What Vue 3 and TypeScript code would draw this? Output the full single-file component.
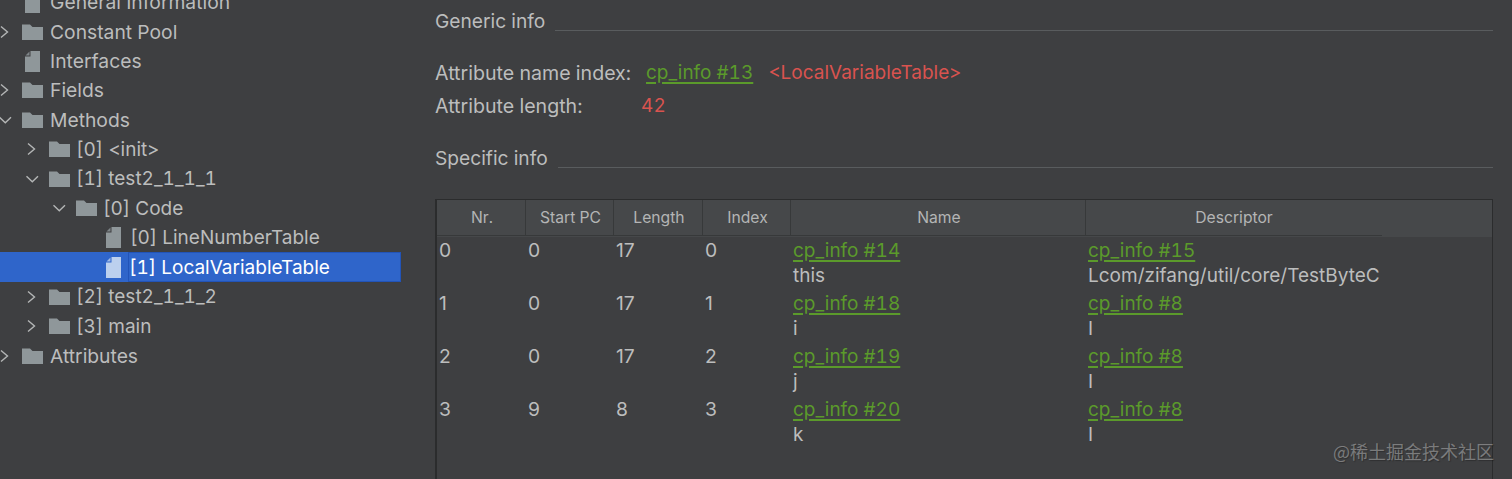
<script setup lang="ts">
interface Node { label: string; level: number; kind: 'folder' | 'file'; arrow?: 'right' | 'down'; selected?: boolean }
const tree: Node[] = [
  { label: 'General Information', level: 0, kind: 'file' },
  { label: 'Constant Pool', level: 0, kind: 'folder', arrow: 'right' },
  { label: 'Interfaces', level: 0, kind: 'file' },
  { label: 'Fields', level: 0, kind: 'folder', arrow: 'right' },
  { label: 'Methods', level: 0, kind: 'folder', arrow: 'down' },
  { label: '[0] <init>', level: 1, kind: 'folder', arrow: 'right' },
  { label: '[1] test2_1_1_1', level: 1, kind: 'folder', arrow: 'down' },
  { label: '[0] Code', level: 2, kind: 'folder', arrow: 'down' },
  { label: '[0] LineNumberTable', level: 3, kind: 'file' },
  { label: '[1] LocalVariableTable', level: 3, kind: 'file', selected: true },
  { label: '[2] test2_1_1_2', level: 1, kind: 'folder', arrow: 'right' },
  { label: '[3] main', level: 1, kind: 'folder', arrow: 'right' },
  { label: 'Attributes', level: 0, kind: 'folder', arrow: 'right' },
]
const headers = ['Nr.', 'Start PC', 'Length', 'Index', 'Name', 'Descriptor']
const rows = [
  { nr: 0, pc: 0, len: 17, idx: 0, nameRef: 'cp_info #14', name: 'this', descRef: 'cp_info #15', desc: 'Lcom/zifang/util/core/TestByteC' },
  { nr: 1, pc: 0, len: 17, idx: 1, nameRef: 'cp_info #18', name: 'i', descRef: 'cp_info #8', desc: 'I' },
  { nr: 2, pc: 0, len: 17, idx: 2, nameRef: 'cp_info #19', name: 'j', descRef: 'cp_info #8', desc: 'I' },
  { nr: 3, pc: 9, len: 8, idx: 3, nameRef: 'cp_info #20', name: 'k', descRef: 'cp_info #8', desc: 'I' },
]
</script>

<template>
  <div class="page">
    <aside class="sidebar">
      <div
        v-for="n in tree"
        :key="n.label"
        class="node"
        :class="{ selected: n.selected, indented: n.level > 0 }"
        :style="{ paddingLeft: n.level * 27 + 'px' }"
      >
        <span class="arrow">
          <svg v-if="n.arrow === 'right'" width="10" height="14" viewBox="0 0 10 14">
            <path d="M1 1.500l6.500 5.500L1 12.500" fill="none" stroke="currentColor" stroke-width="1.400" />
          </svg>
          <svg v-else-if="n.arrow === 'down'" class="down" width="13" height="10" viewBox="0 0 13 10">
            <path d="M0.500 2.300l5.800 5.500L12 2.300" fill="none" stroke="currentColor" stroke-width="1.400" />
          </svg>
        </span>
        <span class="icon">
          <svg v-if="n.kind === 'folder'" width="21" height="16" viewBox="0 0 21 16">
            <path d="M0 0.500h8l2.500 2.500H21v13H0z" fill="currentColor" />
          </svg>
          <svg v-else width="15" height="21" viewBox="0 0 15 21">
            <path d="M5.500 0H15v21H0V5.500H5.500z" fill="currentColor" />
            <path d="M4.500 0.500v4H0.500z" fill="currentColor" opacity="0.8" />
          </svg>
        </span>
        <span class="label">{{ n.label }}</span>
      </div>
    </aside>

    <main class="content">
      <div class="section first">
        <span>Generic info</span>
        <i class="rule"></i>
      </div>
      <div class="attr name-row">
        <span class="attr-label">Attribute name index:</span>
        <a class="link attr-link">cp_info #13</a>
        <span class="red">&lt;LocalVariableTable&gt;</span>
      </div>
      <div class="attr">
        <span class="attr-label">Attribute length:</span>
        <span class="red num">42</span>
      </div>
      <div class="section second">
        <span>Specific info</span>
        <i class="rule"></i>
      </div>

      <div class="table">
        <div class="thead">
          <div v-for="h in headers" :key="h" class="th">{{ h }}</div>
          <div class="filler"></div>
        </div>
        <div v-for="r in rows" :key="r.nr" class="tr">
          <div class="td">{{ r.nr }}</div>
          <div class="td">{{ r.pc }}</div>
          <div class="td">{{ r.len }}</div>
          <div class="td">{{ r.idx }}</div>
          <div class="td stack"><a class="link">{{ r.nameRef }}</a><span class="plain">{{ r.name }}</span></div>
          <div class="td stack"><a class="link">{{ r.descRef }}</a><span class="plain">{{ r.desc }}</span></div>
        </div>
      </div>
    </main>

    <div class="watermark">@稀土掘金技术社区</div>
  </div>
</template>

<style>
html, body { margin: 0; background: #3e3f41; }
</style>

<style scoped>
.page {
  position: relative;
  display: flex;
  width: 1512px;
  height: 479px;
  overflow: hidden;
  background: #3e3f41;
  color: #bcbdbd;
  font-family: Inter, "Noto Sans", sans-serif;
  font-size: 19.300px;
  font-variant-numeric: tabular-nums;
}
.sidebar {
  flex: 0 0 401px;
  margin-top: -12.600px;
}
.node {
  display: flex;
  align-items: center;
  height: 29.460px;
  box-sizing: border-box;
  white-space: nowrap;
}
.node.indented { font-size: 19px; }
.indented .label { margin-left: -1px; }
.node.selected {
  background: #2f65ca;
  color: #fff;
}
.arrow {
  flex: 0 0 22px;
  display: flex;
  align-items: center;
  justify-content: flex-start;
  color: #b4b6b6;
}
.down { margin-left: -1px; }
.icon {
  flex: 0 0 21px;
  display: flex;
  justify-content: center;
  align-items: center;
  margin-right: 7px;
  color: #8f979a;
}
.selected .icon { color: #bcd0ee; }
.selected .label {
  flex: 1;
  align-self: stretch;
  display: flex;
  align-items: center;
  margin-left: -3px;
  padding-left: 0;
  border: 1px solid #2254b8;
}
.content {
  flex: 1;
  padding: 10px 19px 0 34px;
  min-width: 0;
}
.section {
  display: flex;
  align-items: flex-end;
  gap: 10px;
  height: 24px;
  line-height: 24px;
  font-size: 19.200px;
}
.section span { margin-bottom: 1px; }
.second { margin-top: 25px; }
.rule {
  flex: 1;
  height: 1px;
  margin-bottom: 3px;
  background: #595c5e;
}
.attr {
  display: flex;
  align-items: center;
  height: 33px;
}
.name-row { margin-top: 22px; }
.attr-label { flex: 0 0 207px; font-size: 19.600px; }
.attr-link { margin: 0 15px 0 4px; }
.link {
  color: #5b9a2b;
  font-size: 19px;
  text-decoration: underline;
  text-decoration-thickness: 1.500px;
  text-underline-offset: 3px;
}
.red { color: #d9534f; font-size: 19px; }
.num { letter-spacing: 0.300px; margin-left: -1px; }
.table {
  margin-top: 28px;
  height: 300px;
  border: 1px solid #2b2c2d;
  border-left-width: 2px;
  box-sizing: border-box;
}
.thead, .tr {
  display: grid;
  grid-template-columns: 88px 88px 89px 88px 295px 297px 1fr;
}
.thead {
  grid-template-columns: 89px 88px 89px 88px 295px 296px 1fr;
  height: 37px;
  background: #46484a;
  font-size: 15.700px;
}
.th {
  display: flex;
  align-items: center;
  justify-content: center;
  color: #b4b5b5;
  height: 36px;
  padding-left: 2px;
  border-right: 1px solid #37393a;
  border-bottom: 1px solid #37393a;
  box-sizing: border-box;
}
.th:nth-child(6) { border-right: 0; padding-left: 0; }
.tr {
  height: 53px;
  margin-top: -1px;
  margin-bottom: 1px;
}
.td {
  padding: 2px 0 0 3px;
  line-height: 25px;
  white-space: nowrap;
  font-variant-numeric: normal;
}
.td:first-child { padding-left: 2px; }
.stack {
  display: flex;
  flex-direction: column;
  align-items: flex-start;
  font-variant-numeric: tabular-nums;
}
.plain { font-size: 19px; }
.watermark {
  position: absolute;
  right: 18px;
  top: 438px;
  font-family: "Noto Sans CJK SC", sans-serif;
  font-size: 18px;
  line-height: 26px;
  color: rgba(190, 190, 190, 0.5);
  text-shadow: 1px 1px 1px rgba(0, 0, 0, 0.25);
}
</style>
